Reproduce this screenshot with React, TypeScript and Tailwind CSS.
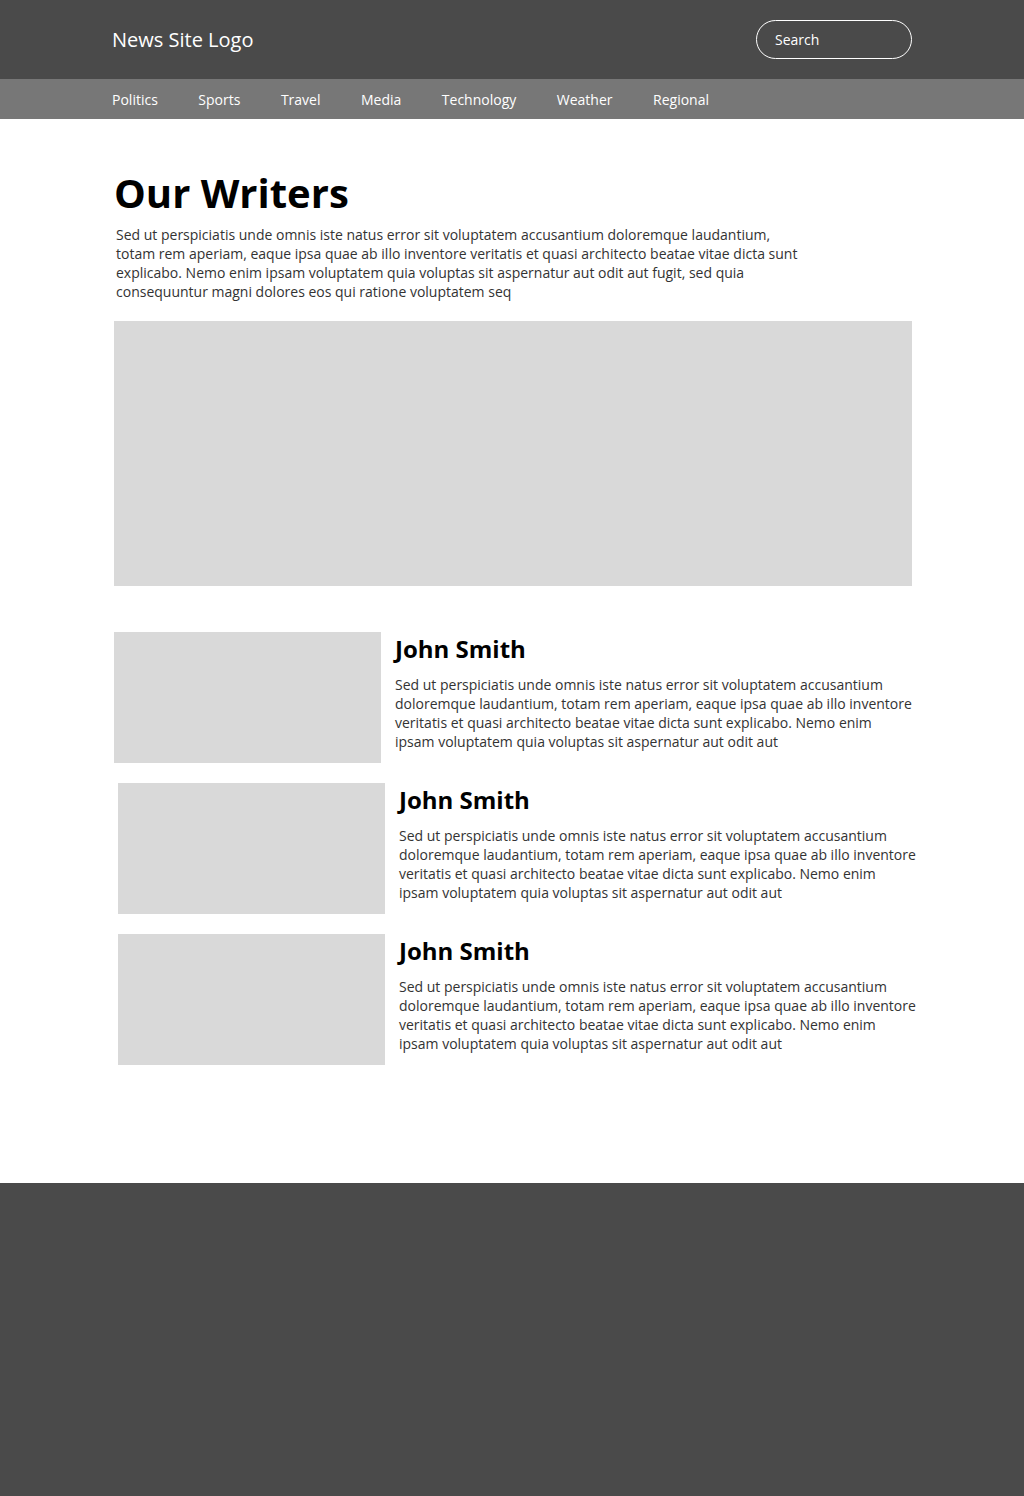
const navLinks = ["Politics", "Sports", "Travel", "Media", "Technology", "Weather", "Regional"];

const lorem =
  "Sed ut perspiciatis unde omnis iste natus error sit voluptatem accusantium doloremque laudantium, totam rem aperiam, eaque ipsa quae ab illo inventore veritatis et quasi architecto beatae vitae dicta sunt explicabo. Nemo enim ipsam voluptatem quia voluptas sit aspernatur aut odit aut";

const writers = [
  { name: "John Smith", shift: false },
  { name: "John Smith", shift: true },
  { name: "John Smith", shift: true },
];

function WriterRow({ name, shift }: { name: string; shift: boolean }) {
  return (
    <div className={`flex ${shift ? "ml-1" : ""}`}>
      <div className="w-[267px] h-[131px] shrink-0 bg-[#d9d9d9]" />
      <div className="ml-[14px] w-[519px] shrink-0 pt-px">
        <h2 className="text-[24px] leading-8 font-bold text-black">{name}</h2>
        <p className="mt-[10px] text-[14px] leading-[19px] text-[#333]">{lorem}</p>
      </div>
    </div>
  );
}

export default function App() {
  return (
    <div className="min-h-screen bg-white font-['Open_Sans',sans-serif]">
      <header className="bg-[#4a4a4a]">
        <div className="mx-auto w-[800px] h-[79px] flex items-center justify-between">
          <span className="text-white text-[20px]">News Site Logo</span>
          <div className="w-[156px] h-[39px] rounded-full border border-white flex items-center pl-[18px] text-white text-[14px]">
            Search
          </div>
        </div>
      </header>
      <nav className="bg-[#777777]">
        <div className="mx-auto w-[800px] h-10 flex items-center gap-[40.5px]">
          {navLinks.map((l) => (
            <a key={l} href="#" className="text-white text-[14px]">
              {l}
            </a>
          ))}
        </div>
      </nav>

      <main className="mx-auto w-[800px] pl-[2px] pt-[50px] pb-[118px]">
        <h1 className="text-[40px] leading-[48px] font-bold text-black">Our Writers</h1>
        <p className="mt-2 pl-[2px] w-[692px] text-[14px] leading-[19px] text-[#333]">
          Sed ut perspiciatis unde omnis iste natus error sit voluptatem accusantium doloremque laudantium, totam rem
          aperiam, eaque ipsa quae ab illo inventore veritatis et quasi architecto beatae vitae dicta sunt explicabo.
          Nemo enim ipsam voluptatem quia voluptas sit aspernatur aut odit aut fugit, sed quia consequuntur magni
          dolores eos qui ratione voluptatem seq
        </p>
        <div className="mt-5 h-[265px] bg-[#d9d9d9]" />
        <div className="mt-[46px] flex flex-col gap-5">
          {writers.map((w, i) => (
            <WriterRow key={i} name={w.name} shift={w.shift} />
          ))}
        </div>
      </main>

      <footer className="bg-[#4a4a4a] h-[313px]" />
    </div>
  );
}
